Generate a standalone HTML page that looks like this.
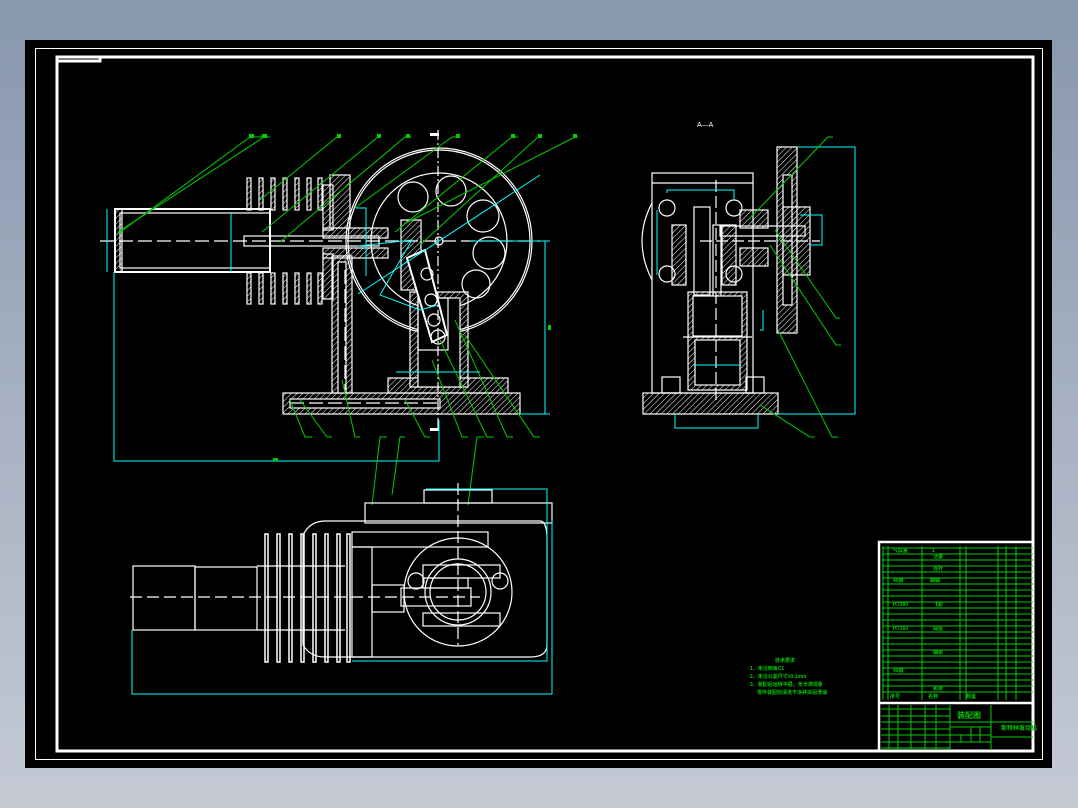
<!DOCTYPE html>
<html><head><meta charset="utf-8"><style>
html,body{margin:0;padding:0;width:1078px;height:808px;overflow:hidden;background:linear-gradient(#8797ad,#c5cad5);}
svg{position:absolute;left:0;top:0}
</style></head><body>
<svg width="1078" height="808" viewBox="0 0 1078 808" xmlns="http://www.w3.org/2000/svg" font-family="Liberation Sans, Noto Sans CJK SC, sans-serif">
<defs>
<pattern id="h" width="4" height="4" patternUnits="userSpaceOnUse" patternTransform="rotate(45)"><line x1="0" y1="0" x2="0" y2="4" stroke="#fff" stroke-width="1"/></pattern>
</defs>
<rect x="25" y="40" width="1027" height="728" fill="#000"/>
<rect x="35.5" y="48.5" width="1007" height="711" fill="none" stroke="#fff" stroke-width="1"/>
<rect x="57" y="57" width="976" height="694" fill="none" stroke="#fff" stroke-width="3"/>
<path d="M58 61 H100 V58" fill="none" stroke="#fff" stroke-width="3"/>

<g fill="none" stroke="#fff" stroke-width="1.2">
<circle cx="439" cy="241" r="93"/><circle cx="439" cy="241" r="91"/>
<circle cx="439" cy="241" r="68"/>
<circle cx="413" cy="197" r="15"/><circle cx="451" cy="191" r="15"/><circle cx="483" cy="216" r="16"/><circle cx="489" cy="253" r="16"/><circle cx="476" cy="284" r="14"/>
<circle cx="439" cy="241" r="4"/>
<rect x="115" y="209" width="155" height="63" stroke-width="2"/>
<rect x="120" y="213" width="150" height="55"/>
<rect x="115" y="209" width="7" height="63" fill="url(#h)"/>
<rect x="244" y="236" width="135" height="10"/>
<g fill="url(#h)">
<rect x="247" y="178" width="4" height="32"/><rect x="259" y="178" width="4" height="32"/><rect x="271" y="178" width="4" height="32"/><rect x="283" y="178" width="4" height="32"/><rect x="295" y="178" width="4" height="32"/><rect x="307" y="178" width="4" height="32"/><rect x="318" y="178" width="4" height="32"/>
<rect x="247" y="273" width="4" height="31"/><rect x="259" y="273" width="4" height="31"/><rect x="271" y="273" width="4" height="31"/><rect x="283" y="273" width="4" height="31"/><rect x="295" y="273" width="4" height="31"/><rect x="307" y="273" width="4" height="31"/><rect x="318" y="273" width="4" height="31"/>
<rect x="330" y="175" width="20" height="53"/>
<rect x="323" y="185" width="10" height="45"/>
<rect x="323" y="254" width="10" height="45"/>
<rect x="323" y="228" width="65" height="10"/>
<rect x="323" y="248" width="65" height="10"/>
<rect x="332" y="256" width="20" height="137"/>
<rect x="401" y="220" width="20" height="70"/>
<rect x="410" y="292" width="58" height="95"/>
<rect x="283" y="393" width="237" height="21"/>
<rect x="388" y="378" width="120" height="15"/>
</g>
<rect x="338" y="262" width="8" height="131" fill="#000"/>
<rect x="290" y="399" width="150" height="9" fill="#000"/>
<rect x="418" y="298" width="42" height="89" fill="#000"/>
<rect x="418" y="298" width="30" height="52"/>
<path d="M407 258 L425 250 L447 335 L432 342 Z" fill="#000" stroke-width="2"/>
<circle cx="427" cy="274" r="6"/><circle cx="431" cy="300" r="6"/><circle cx="434" cy="320" r="6"/><circle cx="438" cy="337" r="7"/>
<line x1="438" y1="130" x2="438" y2="430" stroke-dasharray="10 3 2 3"/>
<line x1="100" y1="241" x2="540" y2="241" stroke-dasharray="14 5"/>
<line x1="290" y1="403" x2="440" y2="403" stroke-dasharray="14 5"/>
<line x1="345" y1="270" x2="345" y2="390" stroke-dasharray="14 5"/>
</g>
<g fill="#fff"><rect x="430" y="133" width="9" height="3"/><rect x="430" y="428" width="9" height="3"/></g>
<g stroke="#0ff" fill="none" stroke-width="1">
<path d="M114 272 V461 H439 V420"/>
<path d="M107 209 V272"/><path d="M231 212 V272"/>
<path d="M356 208 H366 V276"/><path d="M358 246 L412 240 L380 295 L420 310 L438 305"/>
<path d="M358 294 L540 175"/>
<path d="M470 241 H550"/><path d="M520 414 H550"/><path d="M545 241 V414"/>
<path d="M396 372 H480"/>
</g>
<g stroke="#0c0" fill="none" stroke-width="1">
<path d="M116 235 L250 137 H262"/><path d="M118 232 L264 137 H270"/>
<path d="M260 200 L337 137 H341"/><path d="M262 232 L378 137 H381"/>
<path d="M280 242 L405 137 H411"/><path d="M355 208 L452 137 H460"/>
<path d="M395 232 L512 137 H518"/><path d="M420 245 L538 137 H542"/>
<path d="M408 222 L575 137 H578"/>
<path d="M290 400 L305 437 H312"/><path d="M300 400 L327 437 H332"/>
<path d="M342 380 L355 437 H360"/><path d="M405 400 L425 437 H430"/>
<path d="M432 360 L462 437 H468"/><path d="M440 340 L487 437 H494"/>
<path d="M455 320 L507 437 H513"/><path d="M465 335 L534 437 H540"/>
<path d="M372 505 L380 437 H387"/><path d="M392 495 L400 437 H405"/><path d="M468 505 L477 437 H484"/>
</g>
<g fill="#0c0"><rect x="249" y="134" width="5" height="4"/><rect x="262" y="134" width="5" height="4"/><rect x="337" y="134" width="4" height="4"/><rect x="377" y="134" width="4" height="4"/><rect x="406" y="134" width="4" height="4"/><rect x="456" y="134" width="4" height="4"/><rect x="511" y="134" width="4" height="4"/><rect x="538" y="134" width="4" height="4"/><rect x="573" y="134" width="4" height="4"/><rect x="273" y="458" width="5" height="3"/><rect x="548" y="325" width="3" height="5"/></g>

<text x="697" y="127" fill="#fff" font-size="7">A—A</text>
<g fill="none" stroke="#fff" stroke-width="1.2">
<rect x="652" y="173" width="101" height="220"/><line x1="652" y1="183" x2="753" y2="183"/>
<path d="M652 203 Q632 241 652 280"/>
<circle cx="667" cy="208" r="8"/><circle cx="734" cy="208" r="8"/><circle cx="667" cy="274" r="8"/><circle cx="734" cy="274" r="8"/>
<rect x="672" y="225" width="14" height="60" fill="url(#h)"/>
<rect x="722" y="225" width="14" height="60" fill="url(#h)"/>
<rect x="694" y="207" width="16" height="88"/>
<rect x="713" y="225" width="8" height="110"/>
<rect x="688" y="292" width="59" height="98" fill="url(#h)"/>
<rect x="693" y="296" width="49" height="40" fill="#000"/>
<rect x="695" y="340" width="45" height="45" fill="#000"/>
<line x1="683" y1="337" x2="752" y2="337"/>
<rect x="643" y="393" width="135" height="21" fill="url(#h)"/>
<rect x="662" y="377" width="18" height="16"/><rect x="746" y="377" width="18" height="16"/>
<rect x="777" y="147" width="20" height="186" fill="url(#h)"/>
<rect x="783" y="175" width="9" height="130" fill="#000"/>
<rect x="783" y="207" width="27" height="68" fill="url(#h)"/>
<rect x="740" y="210" width="28" height="18" fill="url(#h)"/>
<rect x="740" y="248" width="28" height="18" fill="url(#h)"/>
<rect x="720" y="226" width="85" height="10"/>
<line x1="700" y1="241" x2="820" y2="241" stroke-dasharray="12 4"/>
<line x1="716" y1="180" x2="716" y2="400" stroke-dasharray="12 4"/>
</g>
<g stroke="#0ff" fill="none" stroke-width="1">
<path d="M667 193 V190 H734 V200"/><path d="M657 210 V275"/>
<path d="M797 147 H855 V414 H778"/><path d="M675 414 V428 H758 V414"/>
<path d="M800 215 H822 V245 H810"/><path d="M760 330 H763 V310"/><path d="M693 365 H741"/>
</g>
<g stroke="#0c0" fill="none" stroke-width="1">
<path d="M748 220 L828 137 H833"/><path d="M775 230 L836 318 H840"/><path d="M770 245 L836 345 H841"/><path d="M778 330 L832 437 H838"/><path d="M760 405 L810 437 H815"/>
</g>

<g fill="none" stroke="#fff" stroke-width="1.2">
<rect x="133" y="566" width="62" height="64"/><rect x="195" y="567" width="62" height="63"/>
<path d="M303 535 Q310 521 325 521 H540 Q547 521 547 540 V645 Q547 657 530 657 H325 Q310 657 303 645 Z"/>
<rect x="365" y="503" width="187" height="20"/><rect x="424" y="490" width="68" height="13"/>
<rect x="352" y="532" width="136" height="15"/>
<rect x="352" y="547" width="20" height="110"/>
<circle cx="458" cy="592" r="54"/><circle cx="458" cy="592" r="33"/><circle cx="458" cy="592" r="28"/>
<circle cx="416" cy="581" r="8"/><circle cx="500" cy="581" r="8"/>
<rect x="423" y="565" width="77" height="13"/><rect x="423" y="578" width="45" height="10"/><rect x="401" y="588" width="70" height="18"/><rect x="423" y="613" width="77" height="13"/>
<rect x="372" y="585" width="32" height="27"/>
<g stroke-width="1.5"><rect x="265" y="534" width="3" height="128"/><rect x="277" y="534" width="3" height="128"/><rect x="289" y="534" width="3" height="128"/><rect x="301" y="534" width="3" height="128"/><rect x="313" y="534" width="3" height="128"/><rect x="325" y="534" width="3" height="128"/><rect x="337" y="534" width="3" height="128"/><rect x="347" y="534" width="3" height="128"/></g>
<line x1="257" y1="566" x2="345" y2="566"/><line x1="257" y1="630" x2="345" y2="630"/>
<line x1="130" y1="597" x2="480" y2="597" stroke-dasharray="12 5"/>
<line x1="458" y1="483" x2="458" y2="645" stroke-dasharray="12 4"/>
</g>
<g stroke="#0ff" fill="none" stroke-width="1">
<path d="M132 630 V694 H552 V520"/><path d="M426 489 H547 V661 H352"/>
</g>

<g fill="#0c0" font-size="5" font-weight="bold">
<text x="775" y="662">技术要求</text>
<text x="750" y="670">1、未注倒角C1</text>
<text x="750" y="678">2、未注公差尺寸±0.1mm</text>
<text x="750" y="686">3、装配后运转平稳，无卡滞现象</text>
<text x="757" y="694">零件装配前清洗干净并涂润滑油</text>
</g>

<rect x="879" y="542" width="154" height="209" fill="none" stroke="#fff" stroke-width="2.5"/>
<line x1="879" y1="703" x2="1033" y2="703" stroke="#fff" stroke-width="2.5"/>
<g stroke="#0c0" stroke-width="1" fill="none">
<path d="M883 546 V700 M888 546 V700 M922 546 V700 M960 546 V700 M966 546 V700 M998 546 V700 M1006 546 V700 M1016 546 V700"/>
<path d="M882 548 H1033 M882 554 H1033 M882 560 H1033 M882 566 H1033 M882 572 H1033 M882 578 H1033 M882 584 H1033 M882 590 H1033 M882 596 H1033 M882 602 H1033 M882 608 H1033 M882 614 H1033 M882 620 H1033 M882 626 H1033 M882 632 H1033 M882 638 H1033 M882 644 H1033 M882 650 H1033 M882 656 H1033 M882 662 H1033 M882 668 H1033 M882 674 H1033 M882 680 H1033 M882 686 H1033 M882 692 H1033"/>
<path d="M881 709 H950 M881 716 H950 M881 722 H1033 M881 729 H950 M881 735 H950 M881 742 H950 M881 748 H950"/>
<path d="M889 705 V750 M898 705 V750 M911 705 V750 M925 705 V750 M936 705 V750 M950 705 V750 M991 705 V750"/>
<path d="M950 727 H991 M950 735 H991 M950 742 H991 M971 727 V742 M980 727 V742 M961 735 V742 M991 737 H1033"/>
</g>
<g fill="#0c0" font-size="5" font-weight="bold">
<text x="893" y="552">气缸盖</text><text x="932" y="552">1</text>
<text x="933" y="558">活塞</text><text x="933" y="570">连杆</text><text x="930" y="582">曲轴</text><text x="893" y="582">45钢</text>
<text x="933" y="606">飞轮</text><text x="893" y="606">HT200</text>
<text x="933" y="630">底座</text><text x="893" y="630">HT150</text>
<text x="933" y="654">轴承</text><text x="893" y="672">45钢</text>
<text x="933" y="690">机架</text>
<text x="890" y="698">序号</text><text x="928" y="698">名称</text><text x="966" y="698">数量</text>
<text x="957" y="718" font-size="8">装配图</text>
<text x="1001" y="730" font-size="6">斯特林发动机</text>
</g>
</svg>
</body></html>
